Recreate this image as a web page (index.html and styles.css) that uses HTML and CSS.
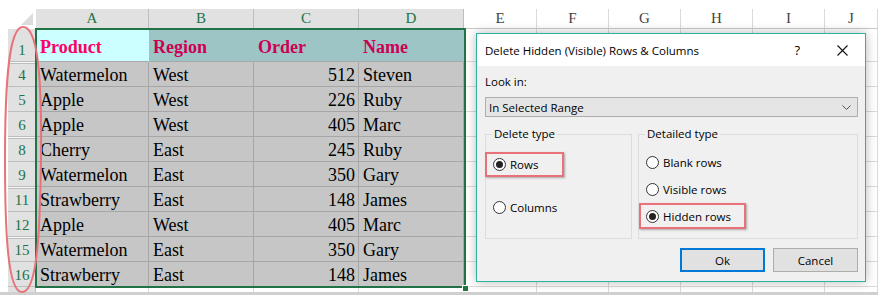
FILE: index.html
```
<!DOCTYPE html>
<html>
<head>
<meta charset="utf-8">
<link rel="stylesheet" href="styles.css">
</head>
<body>
<div class="app">
  <div class="sheet">
    <div class="corner"></div>
    <div class="ch sel">A</div><div class="ch sel">B</div><div class="ch sel">C</div><div class="ch sel">D</div>
    <div class="ch">E</div><div class="ch">F</div><div class="ch">G</div><div class="ch">H</div><div class="ch">I</div><div class="ch">J</div>

    <div class="rh">1</div>
    <div class="c hd first">Product</div><div class="c hd">Region</div><div class="c hd">Order</div><div class="c hd">Name</div>
    <div class="e"></div><div class="e"></div><div class="e"></div><div class="e"></div><div class="e"></div><div class="e"></div>

    <div class="rh gap">4</div>
    <div class="c">Watermelon</div><div class="c">West</div><div class="c num">512</div><div class="c">Steven</div>
    <div class="e"></div><div class="e"></div><div class="e"></div><div class="e"></div><div class="e"></div><div class="e"></div>

    <div class="rh">5</div>
    <div class="c">Apple</div><div class="c">West</div><div class="c num">226</div><div class="c">Ruby</div>
    <div class="e"></div><div class="e"></div><div class="e"></div><div class="e"></div><div class="e"></div><div class="e"></div>

    <div class="rh">6</div>
    <div class="c">Apple</div><div class="c">West</div><div class="c num">405</div><div class="c">Marc</div>
    <div class="e"></div><div class="e"></div><div class="e"></div><div class="e"></div><div class="e"></div><div class="e"></div>

    <div class="rh gap">8</div>
    <div class="c">Cherry</div><div class="c">East</div><div class="c num">245</div><div class="c">Ruby</div>
    <div class="e"></div><div class="e"></div><div class="e"></div><div class="e"></div><div class="e"></div><div class="e"></div>

    <div class="rh">9</div>
    <div class="c">Watermelon</div><div class="c">East</div><div class="c num">350</div><div class="c">Gary</div>
    <div class="e"></div><div class="e"></div><div class="e"></div><div class="e"></div><div class="e"></div><div class="e"></div>

    <div class="rh gap">11</div>
    <div class="c">Strawberry</div><div class="c">East</div><div class="c num">148</div><div class="c">James</div>
    <div class="e"></div><div class="e"></div><div class="e"></div><div class="e"></div><div class="e"></div><div class="e"></div>

    <div class="rh">12</div>
    <div class="c">Apple</div><div class="c">West</div><div class="c num">405</div><div class="c">Marc</div>
    <div class="e"></div><div class="e"></div><div class="e"></div><div class="e"></div><div class="e"></div><div class="e"></div>

    <div class="rh gap">15</div>
    <div class="c">Watermelon</div><div class="c">East</div><div class="c num">350</div><div class="c">Gary</div>
    <div class="e"></div><div class="e"></div><div class="e"></div><div class="e"></div><div class="e"></div><div class="e"></div>

    <div class="rh">16</div>
    <div class="c">Strawberry</div><div class="c">East</div><div class="c num">148</div><div class="c">James</div>
    <div class="e"></div><div class="e"></div><div class="e"></div><div class="e"></div><div class="e"></div><div class="e"></div>

    <div class="rh last"></div>
    <div class="e last"></div><div class="e last"></div><div class="e last"></div><div class="e last"></div>
    <div class="e last"></div><div class="e last"></div><div class="e last"></div><div class="e last"></div><div class="e last"></div><div class="e last"></div>
  </div>
  <div class="bar"></div>

  <div class="selection"><span class="handle"></span></div>

  <svg class="mark" width="60" height="295" viewBox="0 0 60 295">
    <path d="M23 27 C37 27 42 70 41 160 C40 235 37 292 22 292 C8 292 5 235 5 160 C5 80 9 27 23 27 Z" fill="none" stroke="#e8737b" stroke-width="2"/>
  </svg>

  <div class="dialog">
    <div class="titlebar">
      <span class="title">Delete Hidden (Visible) Rows &amp; Columns</span>
      <span class="help">?</span>
      <svg class="close" width="11" height="11" viewBox="0 0 11 11"><path d="M0.5 0.5 L10.5 10.5 M10.5 0.5 L0.5 10.5" stroke="#111" stroke-width="1.1" fill="none"/></svg>
    </div>
    <div class="body">
      <div class="label">Look in:</div>
      <div class="combo">
        <span>In Selected Range</span>
        <svg width="9" height="5" viewBox="0 0 9 5"><path d="M0.5 0.5 L4.5 4.5 L8.5 0.5" stroke="#555" stroke-width="1" fill="none"/></svg>
      </div>
      <div class="groups">
        <fieldset class="grp grp-del">
          <legend>Delete type</legend>
          <div class="radio hl hl-rows"><span class="dot on"></span>Rows</div>
          <div class="radio cols"><span class="dot"></span>Columns</div>
        </fieldset>
        <fieldset class="grp grp-det">
          <legend>Detailed type</legend>
          <div class="radio blank"><span class="dot"></span>Blank rows</div>
          <div class="radio visible"><span class="dot"></span>Visible rows</div>
          <div class="radio hl hl-hidden"><span class="dot on"></span>Hidden rows</div>
        </fieldset>
      </div>
      <div class="buttons">
        <button class="btn ok">Ok</button>
        <button class="btn">Cancel</button>
      </div>
    </div>
  </div>
</div>
</body>
</html>
```

FILE: styles.css
```
* { box-sizing: border-box; }
html, body { margin: 0; padding: 0; background: #fff; }

.app {
  position: relative;
  width: 878px;
  height: 295px;
  overflow: hidden;
  padding: 9px 0 0 8px;
  font-family: "Liberation Serif", "Times New Roman", serif;
}

.sheet {
  display: grid;
  grid-template-columns: 28px 113px 105px 105px 105px 73px 72px 72px 72px 72px 1fr;
  grid-template-rows: 20px 33px repeat(9, 25px) 5px;
}

.corner {
  display: flex;
  justify-content: flex-end;
  align-items: flex-end;
  padding: 0 3px 4px 0;
  background: #fff;
}
.corner::after {
  content: "";
  width: 0;
  height: 0;
  border-left: 12px solid transparent;
  border-bottom: 12px solid #dcdcdc;
}

.ch {
  display: flex;
  align-items: center;
  justify-content: center;
  font-size: 15px;
  line-height: 17px;
  color: #444;
  background: #fff;
  border-right: 1px solid #dadada;
  border-bottom: 1px solid #c8c8c8;
}
.ch.sel {
  background: #e1e1e1;
  color: #217346;
  border-right-color: #bdbdbd;
}

.rh {
  display: flex;
  align-items: flex-end;
  justify-content: center;
  font-size: 15px;
  line-height: 17px;
  padding-bottom: 2px;
  color: #217346;
  background: #e1e1e1;
  border-bottom: 1px solid #bdbdbd;
}
.rh.gap { box-shadow: inset 0 1px 0 #f7f7f7, inset 0 2px 0 #bdbdbd; }
.rh.last { border-bottom: none; border-right: 1px solid #bdbdbd; }

.c {
  display: flex;
  align-items: flex-end;
  padding: 0 3px 1px 4px;
  font-size: 18px;
  line-height: 20px;
  color: #000;
  background: #c6c6c6;
  border-right: 1px solid #a6a6a6;
  border-bottom: 1px solid #a6a6a6;
  white-space: nowrap;
  overflow: hidden;
}
.c.num { justify-content: flex-end; }
.c.hd {
  font-weight: bold;
  align-items: center;
  padding-top: 3px;
  padding-bottom: 0;
  background: #9ec5c5;
  border-right-color: #9ec5c5;
  border-bottom-color: #a8a8a8;
  color: #cc0055;
}
.c.hd.first {
  background: #ccffff;
  border-right-color: #ccffff;
  color: #ff0066;
}

.e {
  background: #fff;
  border-right: 1px solid #dadada;
  border-bottom: 1px solid #dadada;
}
.e.last { border-bottom: none; }

.bar {
  height: 3px;
  margin-left: -8px;
  background: #d0d0d0;
}

.selection {
  position: absolute;
  left: 35px;
  top: 28px;
  width: 431px;
  height: 260px;
  border: 2px solid #217346;
}
.handle {
  position: absolute;
  left: 425px;
  top: 255px;
  width: 7px;
  height: 7px;
  background: #217346;
  border: 1px solid #fff;
}

.mark {
  position: absolute;
  left: 0;
  top: 0;
  pointer-events: none;
}

/* Dialog */
.dialog {
  position: absolute;
  left: 476px;
  top: 33px;
  width: 390px;
  height: 249px;
  border: 1px solid #2bb39f;
  background: #f0f0f0;
  box-shadow: 0 0 10px rgba(0, 0, 0, 0.28);
  font-family: "Open Sans", "Liberation Sans", sans-serif;
  font-size: 11px;
  color: #000;
  display: flex;
  flex-direction: column;
}

.titlebar {
  height: 32px;
  background: #fff;
  display: flex;
  align-items: center;
  padding: 0 17px 0 8px;
}
.title { flex: 1; font-size: 11.5px; }
.help { font-size: 13px; margin-right: 37px; }
.close { display: block; }

.body {
  flex: 1;
  padding: 8px 7px 0 8px;
  display: flex;
  flex-direction: column;
}
.label { line-height: 16px; height: 16px; font-size: 11.5px; }

.combo {
  margin-top: 7px;
  height: 20px;
  background: #e5e5e5;
  border: 1px solid #adadad;
  display: flex;
  align-items: center;
  justify-content: space-between;
  padding: 0 6px 0 3px;
  font-size: 11.5px;
}
.combo svg { display: block; }

.groups {
  margin-top: 9px;
  display: flex;
  gap: 6px;
  height: 113px;
}
.grp {
  margin: 0;
  padding: 0 0 0 7px;
  border: 1px solid #dcdcdc;
  min-width: 0;
  display: flex;
  flex-direction: column;
  align-items: flex-start;
}
.grp legend {
  padding: 0 2px;
  margin-left: -1px;
  line-height: 16px;
  font-size: 11.5px;
}
.grp-del { width: 147px; }
.grp-det { flex: 1; }

.radio {
  display: flex;
  align-items: center;
  gap: 4px;
  height: 16px;
  font-size: 11.5px;
  white-space: nowrap;
}
.dot {
  width: 13px;
  height: 13px;
  border-radius: 50%;
  border: 1px solid #333;
  background: #fff;
  display: flex;
  align-items: center;
  justify-content: center;
  flex: none;
}
.dot.on::after {
  content: "";
  width: 7px;
  height: 7px;
  border-radius: 50%;
  background: #222;
}

.hl {
  border: 2px solid #e8717a;
  box-shadow: 1px 1px 2px rgba(0, 0, 0, 0.3);
}
.hl-rows {
  margin-top: 10px;
  margin-left: -8px;
  width: 79px;
  height: 25px;
  padding-left: 6px;
}
.cols { margin-top: 22px; }
.blank { margin-top: 12px; }
.visible { margin-top: 11px; }
.hl-hidden {
  margin-top: 6px;
  margin-left: -7px;
  width: 107px;
  height: 26px;
  padding-left: 5px;
}

.buttons {
  margin-top: 9px;
  display: flex;
  justify-content: flex-end;
  gap: 8px;
}
.btn {
  width: 85px;
  height: 24px;
  background: #e1e1e1;
  border: 1px solid #adadad;
  font-family: "Open Sans", "Liberation Sans", sans-serif;
  font-size: 11.5px;
  color: #000;
  padding: 0;
}
.btn.ok { border: 2px solid #0078d7; }
```
